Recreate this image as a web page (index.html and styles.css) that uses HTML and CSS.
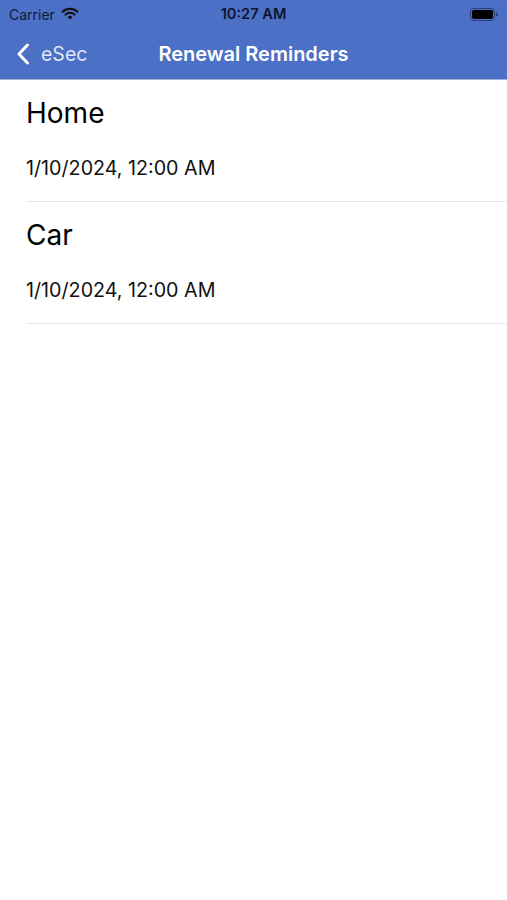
FILE: index.html
```html
<!DOCTYPE html>
<html>
<head>
<meta charset="utf-8">
<link rel="stylesheet" href="styles.css">
</head>
<body>
<header class="header">
  <div class="status">
    <div class="status-left">
      <span class="carrier">Carrier</span>
      <svg class="wifi" width="18" height="13" viewBox="0 0 18 13">
        <path d="M9 12.5 L6.6 9.9 A3.4 3.4 0 0 1 11.4 9.9 Z" fill="#111"/>
        <path d="M4.4 7.6 A6.6 6.6 0 0 1 13.6 7.6" stroke="#111" stroke-width="2" fill="none" stroke-linecap="round"/>
        <path d="M1.6 4.7 A10.6 10.6 0 0 1 16.4 4.7" stroke="#111" stroke-width="2" fill="none" stroke-linecap="round"/>
      </svg>
    </div>
    <span class="time">10:27 AM</span>
    <div class="status-right">
      <svg class="battery" width="28" height="13" viewBox="0 0 28 13">
        <rect x="0.5" y="0.5" width="24" height="12" rx="3.5" fill="none" stroke="#2b3f73" stroke-width="1"/>
        <rect x="2" y="2" width="21" height="9" rx="2" fill="#000"/>
        <path d="M26 4.5 A2 2 0 0 1 26 8.5 Z" fill="#2b3f73"/>
      </svg>
    </div>
  </div>
  <nav class="navbar">
    <div class="back">
      <svg class="chevron" width="14" height="22" viewBox="0 0 14 22">
        <path d="M11.5 2 L3 11 L11.5 20" stroke="#fff" stroke-width="3" fill="none" stroke-linecap="round" stroke-linejoin="round"/>
      </svg>
      <span class="back-label">eSec</span>
    </div>
    <h1 class="title">Renewal Reminders</h1>
  </nav>
</header>
<main class="list">
  <div class="row">
    <div class="row-title">Home</div>
    <div class="row-date">1/10/2024, 12:00 AM</div>
  </div>
  <div class="row">
    <div class="row-title">Car</div>
    <div class="row-date">1/10/2024, 12:00 AM</div>
  </div>
</main>
</body>
</html>
```

FILE: styles.css
```css
* { box-sizing: border-box; }
html, body { margin: 0; padding: 0; background: #fff; }
body {
  font-family: Inter, "Liberation Sans", Arial, sans-serif;
  width: 507px;
  height: 900px;
  overflow: hidden;
}
.header {
  background: #4b70c5;
  height: 80px;
  border-bottom: 1px solid #9fb0d8;
  position: relative;
}
.status {
  height: 28px;
  display: grid;
  grid-template-columns: 1fr auto 1fr;
  align-items: center;
  padding: 0 9px 0 9px;
}
.status-left { display: flex; align-items: center; gap: 6px; }
.carrier { font-size: 14px; color: #111a33; }
.wifi { margin-top: -1px; }
.time { font-size: 14.6px; font-weight: 600; color: #0d1530; }
.status-right { display: flex; justify-content: flex-end; }
.navbar {
  height: 51px;
  position: relative;
  display: flex;
  align-items: center;
  justify-content: center;
}
.back {
  position: absolute;
  left: 16px;
  top: 0;
  bottom: 0;
  display: flex;
  align-items: center;
  gap: 11px;
}
.chevron { display: block; }
.back-label { font-size: 19.5px; color: #dfe6f6; }
.title {
  margin: 0;
  font-size: 20px;
  font-weight: 600;
  color: #fff;
}
.list { padding-left: 26px; }
.row {
  height: 122px;
  border-bottom: 1px solid #e6e6e6;
  padding-top: 17px;
}
.row-title { font-size: 28px; color: #000; line-height: 32px; }
.row-date { font-size: 19.7px; color: #111; margin-top: 27px; line-height: 25px; }
```
